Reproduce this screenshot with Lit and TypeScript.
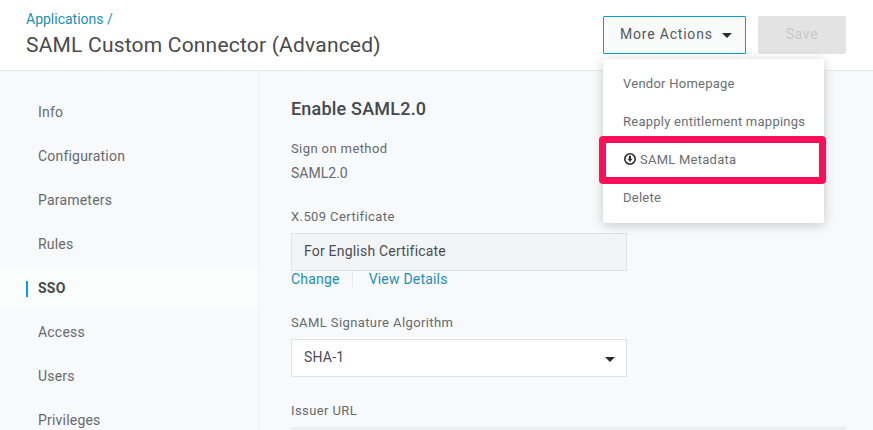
import { LitElement, html, css } from "lit";
import { customElement } from "lit/decorators.js";

const NAV = ["Info", "Configuration", "Parameters", "Rules", "SSO", "Access", "Users", "Privileges"];

@customElement("app-root")
export class AppRoot extends LitElement {
  static styles = css`
    :host { display: block; position: relative; width: 873px; height: 430px; overflow: hidden; background: #f8f9fb; font-family: Roboto, "Liberation Sans", sans-serif; color: #5f6368; font-size: 14px; }
    header { box-sizing: border-box; height: 71px; background: #fff; border-bottom: 1px solid #e8eaed; display: flex; justify-content: space-between; padding: 0 27px 0 26px; }
    .crumb { color: #1b8fb8; font-size: 14px; line-height: 16px; margin-top: 11px; }
    h1 { margin: 5px 0 0; font-size: 21px; line-height: 26px; font-weight: 400; color: #4a4a4a; letter-spacing: 0.2px; }
    .actions { display: flex; gap: 12px; padding-top: 16px; }
    .more { box-sizing: border-box; width: 143px; height: 38px; border: 1px solid #00a1e0; border-radius: 1px; background: #f9fafa; display: flex; align-items: center; padding: 0 0 2px 16px; gap: 9px; color: #55585c; letter-spacing: 0.8px; font-size: 14px; }
    .caret { width: 0; height: 0; border-left: 5px solid transparent; border-right: 5px solid transparent; border-top: 5px solid #2b2b2b; }
    .more .caret { margin-top: 2px; }
    .save { box-sizing: border-box; width: 88px; height: 38px; padding-bottom: 2px; border-radius: 2px; background: #e3e3e3; color: #c9c9c9; display: flex; align-items: center; justify-content: center; letter-spacing: 0.6px; }
    .body { display: flex; height: 359px; }
    nav { box-sizing: border-box; width: 259px; border-right: 1px solid #eef0f2; padding-top: 19px; flex: none; }
    .item { height: 44px; display: flex; align-items: center; padding-left: 38px; position: relative; color: #666a6e; letter-spacing: 0.2px; }
    .item.active { background: #fbfcfc; font-weight: 700; color: #45484c; }
    .item.active::before { content: ""; position: absolute; left: 26px; top: 15px; width: 2px; height: 16px; background: #00a1e0; }
    main { flex: 1; padding: 27px 27px 0 32px; min-width: 0; }
    h2 { margin: 0; font-size: 18px; line-height: 22px; font-weight: 500; color: #45484c; letter-spacing: 0.2px; }
    .label { font-size: 13px; line-height: 16px; letter-spacing: 0.4px; color: #666a6e; }
    .value { font-size: 14px; line-height: 16px; margin-top: 8px; color: #666a6e; }
    .sign { margin-top: 21px; }
    .x509 { margin-top: 28px; }
    .algo { margin-top: 27px; }
    .issuer { margin-top: 26px; }
    .cert { box-sizing: border-box; width: 336px; height: 38px; margin-top: 8px; padding: 0 0 2px 12px; background: #f3f4f6; border: 1px solid #dfe1e3; display: flex; align-items: center; color: #4a4d55; letter-spacing: 0.2px; }
    .links { display: flex; height: 18px; margin-top: -1px; align-items: center; color: #1b8fb8; letter-spacing: 0.2px; }
    .links span:first-child { padding-right: 12px; border-right: 1px solid #e8eaed; margin-right: 16px; }
    .select { box-sizing: border-box; width: 336px; height: 38px; margin-top: 8px; background: #fff; border: 1px solid #dfe1e3; display: flex; align-items: center; justify-content: space-between; padding: 0 11px 2px 12px; color: #4a4d55; letter-spacing: 0.2px; }
    .select .caret { margin-top: 5px; }
    .url { height: 4px; margin-top: 8px; background: #eff0f2; border-top: 1px solid #e8eaed; }
    .menu { position: absolute; left: 603px; top: 59px; width: 221px; height: 164px; padding: 5px 0; box-sizing: border-box; background: #fff; border-radius: 2px; box-shadow: 0 2px 12px rgba(0,0,0,.2); }
    .menu div { height: 38px; display: flex; align-items: center; padding-left: 20px; color: #6b6e72; font-size: 13px; letter-spacing: 0.25px; gap: 3px; }
    .mark { position: absolute; left: 599px; top: 136px; width: 227px; height: 48px; box-sizing: border-box; border: 7px solid #fb0f5b; border-radius: 4px; }
    svg { display: block; }
  `;

  render() {
    return html`
      <header>
        <div>
          <div class="crumb">Applications /</div>
          <h1>SAML Custom Connector (Advanced)</h1>
        </div>
        <div class="actions">
          <div class="more">More Actions <span class="caret"></span></div>
          <div class="save">Save</div>
        </div>
      </header>
      <div class="body">
        <nav>
          ${NAV.map((n) => html`<div class="item ${n === "SSO" ? "active" : ""}">${n}</div>`)}
        </nav>
        <main>
          <h2>Enable SAML2.0</h2>
          <div class="label sign">Sign on method</div>
          <div class="value">SAML2.0</div>
          <div class="label x509">X.509 Certificate</div>
          <div class="cert">For English Certificate</div>
          <div class="links"><span>Change</span><span>View Details</span></div>
          <div class="label algo">SAML Signature Algorithm</div>
          <div class="select">SHA-1 <span class="caret"></span></div>
          <div class="label issuer">Issuer URL</div>
          <div class="url"></div>
        </main>
      </div>
      <div class="menu">
        <div>Vendor Homepage</div>
        <div>Reapply entitlement mappings</div>
        <div>
          <svg width="14" height="14" viewBox="0 0 14 14">
            <circle cx="7" cy="7" r="5.2" fill="none" stroke="#2b2b2b" stroke-width="1.6"></circle>
            <path d="M6 3.8h2v3h1.6L7 9.8 4.4 6.8H6z" fill="#2b2b2b"></path>
          </svg>
          SAML Metadata
        </div>
        <div>Delete</div>
      </div>
      <div class="mark"></div>
    `;
  }
}
